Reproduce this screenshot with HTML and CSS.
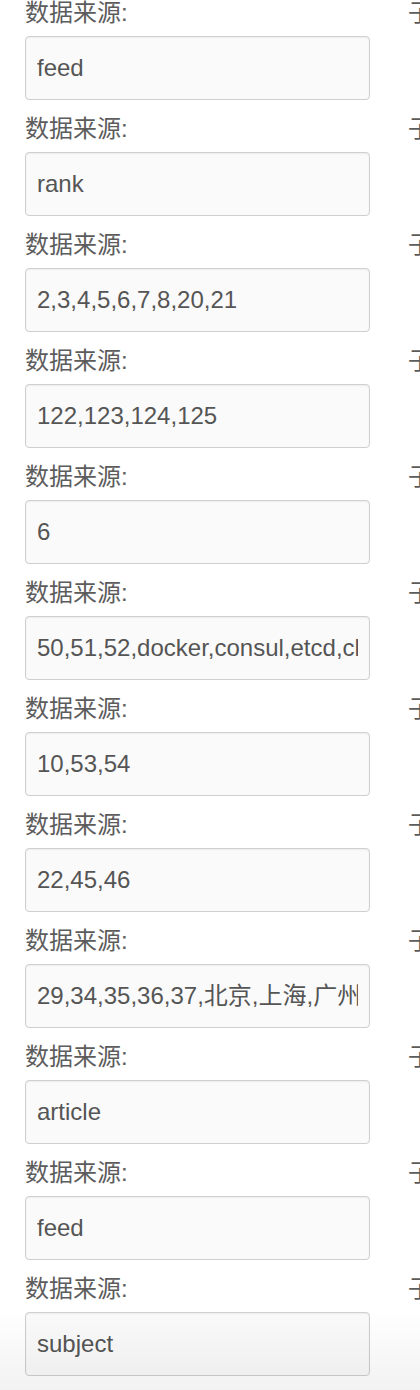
FILE: index.html
```html
<!DOCTYPE html>
<html lang="zh-CN">
<head>
<meta charset="utf-8">
<title>数据来源</title>
<link rel="stylesheet" href="styles.css">
</head>
<body>
<div class="list">
  <div class="row"><div class="field"><div class="label">数据来源:</div><div class="input"><span class="value">feed</span></div></div><div class="side">子数据源:</div></div>
  <div class="row"><div class="field"><div class="label">数据来源:</div><div class="input"><span class="value">rank</span></div></div><div class="side">子数据源:</div></div>
  <div class="row"><div class="field"><div class="label">数据来源:</div><div class="input"><span class="value">2,3,4,5,6,7,8,20,21</span></div></div><div class="side">子数据源:</div></div>
  <div class="row"><div class="field"><div class="label">数据来源:</div><div class="input"><span class="value">122,123,124,125</span></div></div><div class="side">子数据源:</div></div>
  <div class="row"><div class="field"><div class="label">数据来源:</div><div class="input"><span class="value">6</span></div></div><div class="side">子数据源:</div></div>
  <div class="row"><div class="field"><div class="label">数据来源:</div><div class="input"><span class="value">50,51,52,docker,consul,etcd,cloud</span></div></div><div class="side">子数据源:</div></div>
  <div class="row"><div class="field"><div class="label">数据来源:</div><div class="input"><span class="value">10,53,54</span></div></div><div class="side">子数据源:</div></div>
  <div class="row"><div class="field"><div class="label">数据来源:</div><div class="input"><span class="value">22,45,46</span></div></div><div class="side">子数据源:</div></div>
  <div class="row"><div class="field"><div class="label">数据来源:</div><div class="input"><span class="value">29,34,35,36,37,北京,上海,广州,深圳</span></div></div><div class="side">子数据源:</div></div>
  <div class="row"><div class="field"><div class="label">数据来源:</div><div class="input"><span class="value">article</span></div></div><div class="side">子数据源:</div></div>
  <div class="row"><div class="field"><div class="label">数据来源:</div><div class="input"><span class="value">feed</span></div></div><div class="side">子数据源:</div></div>
  <div class="row"><div class="field"><div class="label">数据来源:</div><div class="input"><span class="value">subject</span></div></div><div class="side">子数据源:</div></div>
</div>
<div class="fade"></div>
</body>
</html>
```
FILE: styles.css
```css
html, body {
  margin: 0;
  padding: 0;
  background: #ffffff;
  overflow: hidden;
}
body {
  font-family: "Liberation Sans", "Noto Sans CJK SC", sans-serif;
  color: #555555;
  width: 420px;
  height: 1390px;
}
.list {
  display: flex;
  flex-direction: column;
  gap: 16px;
  padding-left: 25px;
}
.row {
  display: flex;
  gap: 38px;
  white-space: nowrap;
}
.field {
  width: 345px;
  flex: none;
  display: flex;
  flex-direction: column;
  gap: 10px;
}
.label, .side {
  font-size: 24px;
  line-height: 26px;
  height: 26px;
  color: #5c5c5c;
}
.side {
  flex: none;
}
.input {
  box-sizing: border-box;
  height: 64px;
  border: 1px solid #cfcfcf;
  border-radius: 4px;
  background: #fafafa;
  box-shadow: inset 0 1px 2px rgba(0, 0, 0, 0.06);
  padding: 0 11px;
  display: flex;
  align-items: center;
}
.value {
  display: block;
  min-width: 0;
  flex: 1;
  overflow: hidden;
  white-space: nowrap;
  font-size: 24px;
  line-height: 30px;
  color: #555555;
}
.fade {
  position: fixed;
  left: 0;
  right: 0;
  bottom: 0;
  height: 80px;
  background: linear-gradient(to bottom, rgba(0, 0, 0, 0), rgba(0, 0, 0, 0.05));
  pointer-events: none;
}
```
